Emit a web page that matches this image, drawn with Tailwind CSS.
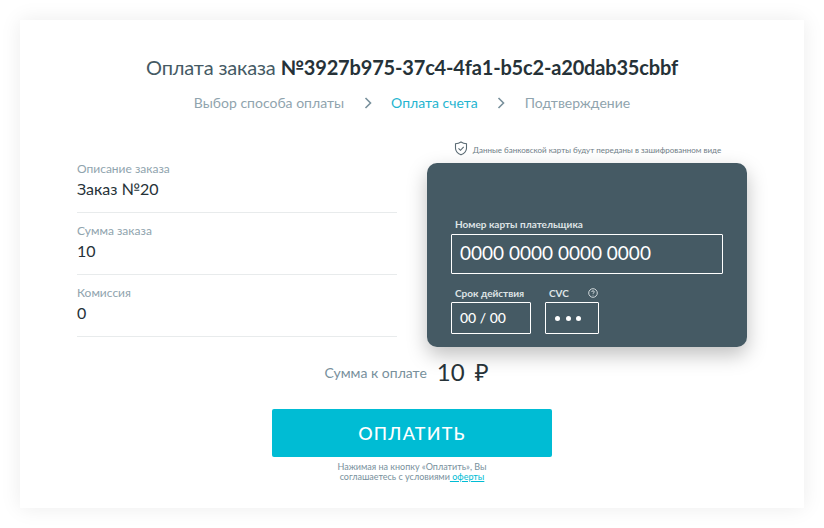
<!DOCTYPE html>
<html lang="ru">
<head>
<meta charset="UTF-8">
<title>Оплата заказа</title>
<script src="https://cdn.jsdelivr.net/npm/@tailwindcss/browser@4"></script>
</head>
<body class="bg-white h-[528px] overflow-hidden pt-5 px-5 font-['Lato','Noto_Sans',sans-serif]">
<div class="w-[784px] h-[488px] bg-white shadow-[0_0_20px_rgba(0,0,0,0.08)] flex flex-col items-center pt-[33px]">
  <h1 class="h-7 leading-7 text-[20px] tracking-[-0.17px] text-[#455a64] whitespace-nowrap">Оплата заказа <b class="font-bold text-[#263238]">№3927b975-37c4-4fa1-b5c2-a20dab35cbbf</b></h1>

  <div class="mt-3 h-5 flex items-center text-[14px] leading-5 text-[#90a4ae]">
    <span>Выбор способа оплаты</span>
    <svg class="mx-[19.5px] w-2 h-3" viewBox="0 0 8 12" fill="none" stroke="#78909c" stroke-width="1.6"><path d="M1.5 1l5 5-5 5"/></svg>
    <span class="text-[#1fb5d0]">Оплата счета</span>
    <svg class="mx-[19.5px] w-2 h-3" viewBox="0 0 8 12" fill="none" stroke="#78909c" stroke-width="1.6"><path d="M1.5 1l5 5-5 5"/></svg>
    <span>Подтверждение</span>
  </div>

  <div class="w-full mt-6 pl-[57px] flex">
    <div class="w-[320px] pt-[14px]">
      <div class="h-[62px] border-b border-[#e8ebec] pt-[10px]">
        <div class="text-[12px] leading-4 text-[#90a4ae]">Описание заказа</div>
        <div class="mt-[1px] text-[16px] leading-[22px] text-[#263238]">Заказ №20</div>
      </div>
      <div class="h-[62px] border-b border-[#e8ebec] pt-[10px]">
        <div class="text-[12px] leading-4 text-[#90a4ae]">Сумма заказа</div>
        <div class="mt-[1px] text-[16px] leading-[22px] text-[#263238]">10</div>
      </div>
      <div class="h-[62px] border-b border-[#e8ebec] pt-[10px]">
        <div class="text-[12px] leading-4 text-[#90a4ae]">Комиссия</div>
        <div class="mt-[1px] text-[16px] leading-[22px] text-[#263238]">0</div>
      </div>
    </div>

    <div class="ml-[30px] w-[320px]">
      <div class="h-[26px] pb-[1px] flex items-center justify-center gap-[5px] pl-[1px]">
        <svg class="w-[14px] h-[15px] -translate-y-[1px]" viewBox="0 0 14 15" fill="none" stroke="#5a6a73" stroke-width="1.1"><path d="M7 1c1.6 1.1 3.4 1.7 5.500 1.800v4.400c0 3-2.200 5.200-5.500 6.600-3.300-1.400-5.500-3.600-5.500-6.600V2.800C3.600 2.700 5.400 2.100 7 1z"/><path d="M4.500 7.300l2 2 3.200-3.400"/></svg>
        <span class="text-[8px] leading-3 text-[#6f7d86] whitespace-nowrap">Данные банковской карты будут переданы в зашифрованном виде</span>
      </div>
      <div class="h-[184px] rounded-[10px] bg-[#455a64] shadow-[0_8px_20px_rgba(0,0,0,0.25)] pt-[55px] pl-6">
        <div class="pl-1 text-[10px] leading-3 font-bold text-[#dfe4e6]">Номер карты плательщика</div>
        <div class="mt-1 w-[272px] h-10 border border-white rounded-[1px] pl-2 pb-[1px] flex items-center text-[19px] text-white">0000 0000 0000 0000</div>
        <div class="mt-[13px] flex gap-[14px]">
          <div>
            <div class="pl-1 text-[10px] leading-3 font-bold text-[#dfe4e6]">Срок действия</div>
            <div class="mt-[3px] w-20 h-8 border border-white rounded-[1px] pl-2 pb-[2px] flex items-center text-[14px] font-medium text-white">00 / 00</div>
          </div>
          <div>
            <div class="pl-1 flex items-center text-[10px] leading-3 font-bold text-[#dfe4e6]">
              <span>CVC</span>
              <svg class="ml-[19px] w-[10px] h-[10px]" viewBox="0 0 10 10" fill="none" stroke="#dfe4e6" stroke-width="0.9"><circle cx="5" cy="5" r="4.300"/><path d="M3.700 4c0-.8.6-1.200 1.300-1.200s1.300.4 1.300 1.100c0 .9-1.300 1-1.300 1.900"/><path d="M5 6.900v.6"/></svg>
            </div>
            <div class="mt-[3px] w-[54px] h-8 border border-white rounded-[1px] pl-[9px] flex items-center gap-[5.6px]">
              <span class="w-[5px] h-[5px] rounded-full bg-white"></span>
              <span class="w-[5px] h-[5px] rounded-full bg-white"></span>
              <span class="w-[5px] h-[5px] rounded-full bg-white"></span>
            </div>
          </div>
        </div>
      </div>
    </div>
  </div>

  <div class="mt-2 mr-[11px] h-[34px] flex items-center">
    <span class="text-[14px] text-[#78909c]">Сумма к оплате</span>
    <span class="ml-[10px] text-[24px] text-[#263238]">10</span>
    <span class="ml-[10px] text-[24px] text-[#263238]">₽</span>
  </div>

  <button class="mt-5 w-[280px] h-12 rounded-[2px] bg-[#00bcd4] text-white text-[18px] font-medium tracking-[1.2px]">ОПЛАТИТЬ</button>

  <p class="mt-[5px] w-[170px] text-center text-[9px] leading-[10px] text-[#78909c]">Нажимая на кнопку «Оплатить», Вы соглашаетесь с условиями<a class="text-[#00bcd4] underline"> оферты</a></p>
</div>
</body>
</html>
